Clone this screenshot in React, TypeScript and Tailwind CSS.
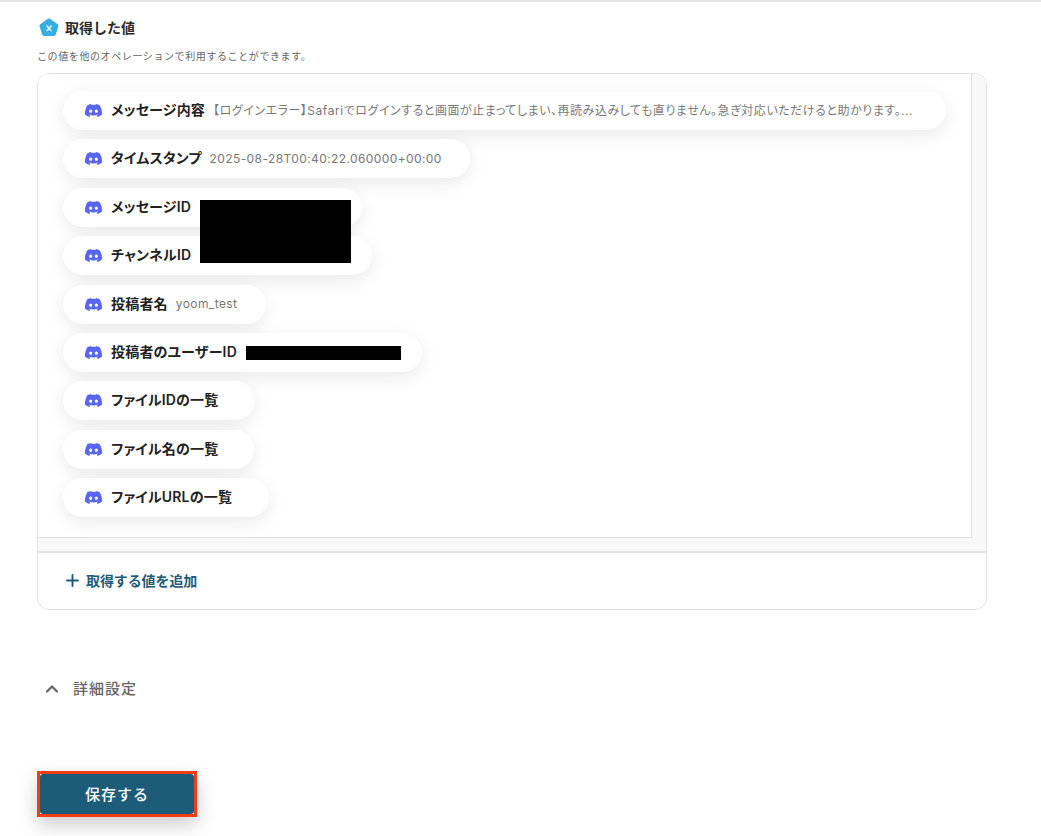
import { ChevronUp, Plus } from "lucide-react";
import { SiDiscord } from "react-icons/si";

type Chip = {
  label: string;
  value?: string;
  width: string;
  tracking?: string;
};

const chips: Chip[] = [
  {
    label: "メッセージ内容",
    value: "【ログインエラー】Safariでログインすると画面が止まってしまい、再読み込みしても直りません。急ぎ対応いただけると助かります。...",
    width: "w-[883px]",
    tracking: "tracking-[0.53px]",
  },
  { label: "タイムスタンプ", value: "2025-08-28T00:40:22.060000+00:00", width: "w-[407px]" },
  { label: "メッセージID", width: "w-[299px]" },
  { label: "チャンネルID", width: "w-[309px]" },
  { label: "投稿者名", value: "yoom_test", width: "w-[203px]" },
  { label: "投稿者のユーザーID", width: "w-[359px]" },
  { label: "ファイルIDの一覧", width: "w-[192px]" },
  { label: "ファイル名の一覧", width: "w-[191px]" },
  { label: "ファイルURLの一覧", width: "w-[206px]" },
];

function ValueChip({ chip }: { chip: Chip }) {
  return (
    <div
      className={`flex h-[39px] items-center rounded-full bg-white pl-[22px] shadow-[0_5px_18px_rgba(0,0,0,0.09)] ${chip.width}`}
    >
      <SiDiscord className="size-[17px] shrink-0 text-[#5865f2]" />
      <span className="ml-[9px] shrink-0 pb-[2px] text-[14px] font-semibold tracking-[0.2px] text-[#222] [font-feature-settings:'palt']">
        {chip.label}
      </span>
      {chip.value && (
        <span
          className={`ml-[8px] whitespace-nowrap text-[12px] text-[#777] [font-feature-settings:'palt'] ${chip.tracking ?? "tracking-[0.4px]"}`}
        >
          {chip.value}
        </span>
      )}
    </div>
  );
}

export default function App() {
  return (
    <div className="h-[836px] overflow-hidden border-t-2 border-[#e6e6e6] bg-white pl-[37px] font-['Inter','Noto_Sans_CJK_JP',sans-serif]">
      <div className="flex h-[36px] items-end gap-[6px] pl-[2px]">
        <svg viewBox="0 0 20 20" className="size-[20px]">
          <path
            d="M8.6 1 1.3 6.2a1.8 1.8 0 0 0-.7 2l2.6 8.4a1.8 1.8 0 0 0 1.7 1.3h10.2a1.8 1.8 0 0 0 1.7-1.3l2.6-8.4a1.8 1.8 0 0 0-.7-2L11.4 1a2.4 2.4 0 0 0-2.8 0Z"
            fill="#35aee2"
          />
          <path d="m8 8 4 4.6M12 8l-4 4.6" stroke="#fff" strokeWidth="1.4" strokeLinecap="round" />
        </svg>
        <span className="text-[14px] leading-[20px] font-semibold text-[#2b2b2b]">取得した値</span>
      </div>
      <p className="mt-[11px] h-[15px] text-[10px] leading-[15px] tracking-[0.6px] text-[#666]">
        この値を他のオペレーションで利用することができます。
      </p>
      <div className="mt-[9px] h-[537px] w-[950px] overflow-hidden rounded-xl border border-[#e2e2e2]">
        <div className="h-[479px] border-b-2 border-[#e2e2e2] bg-[#f8f8f8]">
          <div className="relative flex h-[464px] w-[934px] flex-col gap-[9.4px] border-r border-b border-[#e2e2e2] bg-white pt-[17px] pl-[25px]">
            {chips.map((chip) => (
              <ValueChip key={chip.label} chip={chip} />
            ))}
            <div className="absolute top-[126px] left-[162px] h-[63px] w-[151px] bg-black" />
            <div className="absolute top-[272px] left-[208px] h-[14px] w-[155px] bg-black" />
          </div>
        </div>
        <div className="flex h-[56px] items-center gap-[4px] pb-[1px] pl-[25px] text-[14px] font-semibold tracking-[-0.1px] text-[#1f5c78]">
          <Plus className="size-[19px]" strokeWidth={2.4} />
          <span>取得する値を追加</span>
        </div>
      </div>
      <div className="mt-[67px] flex h-[24px] items-center gap-[11px] pl-[5px] text-[15px] font-medium tracking-[1px] text-[#666]">
        <ChevronUp className="size-[20px]" strokeWidth={2.6} />
        <span>詳細設定</span>
      </div>
      <div className="mt-[70px] h-[46px] w-[160px] border-[3px] border-[#f03d14] bg-white shadow-[0_8px_20px_rgba(0,0,0,0.2)]">
        <button
          type="button"
          className="flex h-full w-full items-center justify-center rounded-[3px] bg-[#1d5c78] pt-[2px] text-[15px] font-medium tracking-[1px] text-white"
        >
          保存する
        </button>
      </div>
    </div>
  );
}
